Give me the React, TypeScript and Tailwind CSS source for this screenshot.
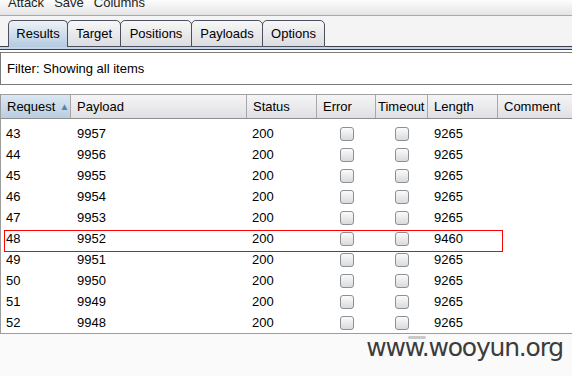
import React from "react";

const rows = Array.from({ length: 10 }, (_, i) => ({
  req: 43 + i,
  payload: 9957 - i,
  status: 200,
  length: 43 + i === 48 ? 9460 : 9265,
}));

const cols = [
  { name: "Request", w: "w-[70px]" },
  { name: "Payload", w: "w-[176px]" },
  { name: "Status", w: "w-[70px]" },
  { name: "Error", w: "w-[59px]" },
  { name: "Timeout", w: "w-[52px]" },
  { name: "Length", w: "w-[70px]" },
  { name: "Comment", w: "flex-1" },
];

function Checkbox() {
  return (
    <div className="w-[14px] h-[14px] rounded-[3px] border border-[#8c8f94] bg-gradient-to-b from-[#fbfbfb] to-[#d9dadd]" />
  );
}

function Tab({ label, selected, w }: { label: string; selected?: boolean; w: string }) {
  if (selected) {
    return (
      <div
        className={`${w} h-[27px] flex items-center justify-center rounded-t-[5px] border-x border-t border-[#4a5060] bg-gradient-to-b from-[#eef2f6] to-[#b4cbe0] text-black`}
      >
        {label}
      </div>
    );
  }
  return (
    <div
      className={`${w} h-[27px] -ml-px flex items-center justify-center rounded-t-[5px] border border-[#4a5060] bg-gradient-to-b from-[#f7f7f7] to-[#dcdde1] text-black`}
    >
      {label}
    </div>
  );
}

export default function App() {
  return (
    <div className="w-[572px] h-[376px] overflow-hidden bg-[#fafafa] font-['Liberation_Sans',Arial,sans-serif] text-[13px] text-black flex flex-col">
      {/* Menu bar */}
      <div className="h-[16px] shrink-0 overflow-hidden border-b border-[#a9a9a9] bg-gradient-to-b from-[#fdfdfd] to-[#e4e4e4]">
        <div className="-mt-[6px] leading-[17px] pl-[8px] flex gap-[10px] text-[#222]">
          <span>Attack</span>
          <span>Save</span>
          <span>Columns</span>
        </div>
      </div>

      {/* Tabs */}
      <div className="h-[31px] shrink-0 flex items-end bg-[#f4f4f4]">
        <div className="w-[8px] h-px bg-[#3a3f4a]" />
        <Tab label="Results" selected w="w-[60px]" />
        <Tab label="Target" w="w-[54px]" />
        <Tab label="Positions" w="w-[72px]" />
        <Tab label="Payloads" w="w-[72px]" />
        <Tab label="Options" w="w-[63px]" />
        <div className="flex-1 h-px bg-[#3a3f4a]" />
      </div>
      <div className="h-[2px] shrink-0 bg-[#c2d5e8]" />
      <div className="h-px shrink-0 bg-[#3a3f4a]" />

      {/* Content */}
      <div className="bg-white shrink-0 pt-[2px] pb-[9px]">
        <div className="h-[33px] border-y border-l border-[#7b7b7b] flex items-center pl-[6px]">
          Filter: Showing all items
        </div>
      </div>

      {/* Table */}
      <div className="bg-white shrink-0 border-l border-[#9c9c9c] border-b border-b-[#9c9c9c] relative">
        <div className="h-[25px] flex border-t border-b border-[#a0a0a0] border-b-[#8e8e8e]">
          {cols.map((c, i) => (
            <div
              key={c.name}
              className={`${c.w} h-full flex items-center ${
                c.name === "Timeout" ? "pl-[2px]" : "pl-[6px]"
              } ${i < cols.length - 1 ? "border-r border-[#a8a8a8]" : ""} ${
                i === 0
                  ? "bg-gradient-to-b from-[#dce7f1] to-[#b9cee2]"
                  : "bg-gradient-to-b from-[#f5f5f6] to-[#dfe0e4]"
              }`}
            >
              {c.name}
              {i === 0 && <span className="ml-[4px] text-[10px] leading-none text-[#5a83aa]">▲</span>}
            </div>
          ))}
        </div>
        <div className="pt-[4px]">
          {rows.map((r) => (
            <div key={r.req} className="h-[21px] flex items-center pt-[1px]">
              <div className="w-[70px] pl-[5px]">{r.req}</div>
              <div className="w-[176px] pl-[6px]">{r.payload}</div>
              <div className="w-[70px] pl-[5px]">{r.status}</div>
              <div className="w-[59px] flex justify-center">
                <Checkbox />
              </div>
              <div className="w-[52px] flex justify-center">
                <Checkbox />
              </div>
              <div className="w-[70px] pl-[6px]">{r.length}</div>
              <div className="flex-1" />
            </div>
          ))}
        </div>
        {/* highlight box */}
        <div className="absolute left-[3px] top-[136px] w-[499px] h-[22px] border border-[#ff0000] pointer-events-none" />
      </div>

      {/* Bottom / watermark */}
      <div className="flex-1 relative flex justify-end items-start pr-[9px]">
        <div className="absolute left-[408px] top-[2px] w-[18px] h-[3px] rounded-[2px] bg-[#c9c9cb]" />
        <div className="font-['DejaVu_Sans',sans-serif] tracking-[-1.2px] text-[25px] leading-[28px] text-[#3c3c3c]">
          www.wooyun.org
        </div>
      </div>
    </div>
  );
}
